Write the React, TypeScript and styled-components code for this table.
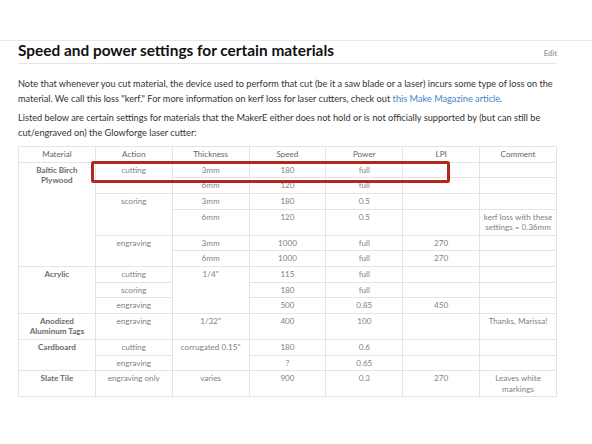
import React from "react";
import styled, { createGlobalStyle } from "styled-components";

const Global = createGlobalStyle`
  html, body { margin: 0; padding: 0; background: #fff; }
  body { font-family: Lato, "Open Sans", sans-serif; }
`;

const TopBar = styled.div`
  height: 40px;
  border-bottom: 1px solid #e8e8e8;
`;

const Content = styled.div`
  padding: 0 35px 0 18px;
`;

const TitleRow = styled.div`
  display: flex;
  justify-content: space-between;
  align-items: baseline;
  padding-bottom: 4px;
  border-bottom: 1px solid #e6e6e6;
`;

const Title = styled.h2`
  margin: 0;
  font-size: 15.4px;
  line-height: 18.2px;
  font-weight: 700;
  color: #111;
`;

const Edit = styled.span`
  font-size: 7.6px;
  font-weight: 700;
  color: #a0a0a0;
`;

const Para = styled.p<{ $first?: boolean }>`
  margin: ${(p) => (p.$first ? "11.5px" : "4px")} 0 0;
  font-size: 9.2px;
  line-height: 15px;
  color: #333;
`;

const Link = styled.a`
  color: #3f84c9;
  text-decoration: none;
`;

const TableWrap = styled.div`
  position: relative;
  margin-top: 6.5px;
`;

const Table = styled.table`
  width: 100%;
  border-collapse: collapse;
  table-layout: fixed;
`;

const Cell = styled.td<{ $head?: boolean; $strong?: boolean }>`
  border: 1px solid #e4e4e4;
  padding: 2px 3px;
  font-size: 8.1px;
  line-height: 10.6px;
  text-align: center;
  vertical-align: top;
  font-weight: ${(p) => (p.$strong ? 700 : 400)};
  color: ${(p) => (p.$head ? "#666" : p.$strong ? "#6a6a6a" : "#7f7f7f")};
`;

const Highlight = styled.div`
  position: absolute;
  left: 73px;
  top: 15px;
  width: 358.6px;
  height: 21.3px;
  box-sizing: border-box;
  border: 3px solid #b3281c;
  border-radius: 2.5px;
  pointer-events: none;
`;

type C = { t: string; rs?: number; b?: boolean };

const headers = ["Material", "Action", "Thickness", "Speed", "Power", "LPI", "Comment"];

const rows: C[][] = [
  [{ t: "Baltic Birch Plywood", rs: 6, b: true }, { t: "cutting", rs: 2 }, { t: "3mm" }, { t: "180" }, { t: "full" }, { t: "" }, { t: "" }],
  [{ t: "6mm" }, { t: "120" }, { t: "full" }, { t: "" }, { t: "" }],
  [{ t: "scoring", rs: 2 }, { t: "3mm" }, { t: "180" }, { t: "0.5" }, { t: "" }, { t: "" }],
  [{ t: "6mm" }, { t: "120" }, { t: "0.5" }, { t: "" }, { t: "kerf loss with these settings = 0.36mm" }],
  [{ t: "engraving", rs: 2 }, { t: "3mm" }, { t: "1000" }, { t: "full" }, { t: "270" }, { t: "" }],
  [{ t: "6mm" }, { t: "1000" }, { t: "full" }, { t: "270" }, { t: "" }],
  [{ t: "Acrylic", rs: 3, b: true }, { t: "cutting" }, { t: "1/4\"", rs: 3 }, { t: "115" }, { t: "full" }, { t: "" }, { t: "" }],
  [{ t: "scoring" }, { t: "180" }, { t: "full" }, { t: "" }, { t: "" }],
  [{ t: "engraving" }, { t: "500" }, { t: "0.85" }, { t: "450" }, { t: "" }],
  [{ t: "Anodized Aluminum Tags", b: true }, { t: "engraving" }, { t: "1/32\"" }, { t: "400" }, { t: "100" }, { t: "" }, { t: "Thanks, Marissa!" }],
  [{ t: "Cardboard", rs: 2, b: true }, { t: "cutting" }, { t: "corrugated 0.15\"", rs: 2 }, { t: "180" }, { t: "0.6" }, { t: "" }, { t: "" }],
  [{ t: "engraving" }, { t: "?" }, { t: "0.65" }, { t: "" }, { t: "" }],
  [{ t: "Slate Tile", b: true }, { t: "engraving only" }, { t: "varies" }, { t: "900" }, { t: "0.3" }, { t: "270" }, { t: "Leaves white markings" }],
];

export default function App() {
  return (
    <>
      <Global />
      <TopBar />
      <Content>
        <TitleRow>
          <Title>Speed and power settings for certain materials</Title>
          <Edit>Edit</Edit>
        </TitleRow>
        <Para $first>
          Note that whenever you cut material, the device used to perform that cut (be it a saw blade or a laser) incurs some type of loss on the material. We call this loss "kerf." For more information on kerf loss for laser cutters, check out{" "}
          <Link href="#">this Make Magazine article</Link>.
        </Para>
        <Para>
          Listed below are certain settings for materials that the MakerE either does not hold or is not officially supported by (but can still be cut/engraved on) the Glowforge laser cutter:
        </Para>
        <TableWrap>
          <Table>
            <thead>
              <tr>
                {headers.map((h) => (
                  <Cell as="th" key={h} $head>
                    {h}
                  </Cell>
                ))}
              </tr>
            </thead>
            <tbody>
              {rows.map((r, i) => (
                <tr key={i}>
                  {r.map((c, j) => (
                    <Cell key={j} rowSpan={c.rs} $strong={c.b}>
                      {c.t}
                    </Cell>
                  ))}
                </tr>
              ))}
            </tbody>
          </Table>
          <Highlight />
        </TableWrap>
      </Content>
    </>
  );
}
